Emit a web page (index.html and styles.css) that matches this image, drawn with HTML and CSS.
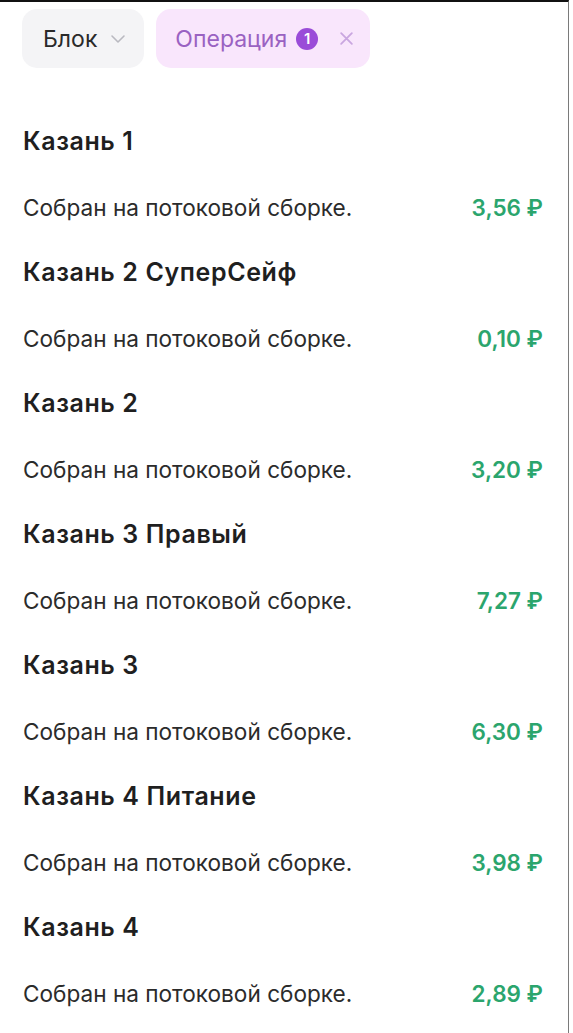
FILE: index.html
```html
<!DOCTYPE html>
<html lang="ru">
<head>
    <meta charset="UTF-8">
    <meta name="viewport" content="width=device-width, initial-scale=1.0">
    <title>Операции</title>
    <link rel="stylesheet" href="styles.css">
</head>
<body>

<div class="screen">
    <div class="filters">
        <div class="chip">
            <span>Блок</span>
            <svg class="chevron" width="16" height="10" viewBox="0 0 16 10"><path d="M2 2l6 6 6-6" fill="none" stroke="currentColor" stroke-width="1.6" stroke-linecap="round" stroke-linejoin="round"/></svg>
        </div>
        <div class="chip chip-active">
            <span>Операция</span>
            <span class="badge">1</span>
            <svg class="close" width="15" height="15" viewBox="0 0 14 14"><path d="M2 2l10 10M12 2L2 12" fill="none" stroke="currentColor" stroke-width="1.7" stroke-linecap="round"/></svg>
        </div>
    </div>

    <div class="list">
        <div class="group">
            <div class="title">Казань 1</div>
            <div class="row"><span>Собран на потоковой сборке.</span><span class="price">3,56 ₽</span></div>
        </div>
        <div class="group">
            <div class="title">Казань 2 СуперСейф</div>
            <div class="row"><span>Собран на потоковой сборке.</span><span class="price">0,10 ₽</span></div>
        </div>
        <div class="group">
            <div class="title">Казань 2</div>
            <div class="row"><span>Собран на потоковой сборке.</span><span class="price">3,20 ₽</span></div>
        </div>
        <div class="group">
            <div class="title">Казань 3 Правый</div>
            <div class="row"><span>Собран на потоковой сборке.</span><span class="price">7,27 ₽</span></div>
        </div>
        <div class="group">
            <div class="title">Казань 3</div>
            <div class="row"><span>Собран на потоковой сборке.</span><span class="price">6,30 ₽</span></div>
        </div>
        <div class="group">
            <div class="title">Казань 4 Питание</div>
            <div class="row"><span>Собран на потоковой сборке.</span><span class="price">3,98 ₽</span></div>
        </div>
        <div class="group">
            <div class="title">Казань 4</div>
            <div class="row"><span>Собран на потоковой сборке.</span><span class="price">2,89 ₽</span></div>
        </div>
    </div>
</div>

</body>
</html>
```

FILE: styles.css
```css
body {
    margin: 0;
    background: #fff;
    font-family: Inter, "Noto Sans", sans-serif;
    color: #232323;
}

.screen {
    width: 568px;
    height: 1031px;
    border-top: 2px solid #111;
    border-right: 1px solid #7a7a7a;
    overflow: hidden;
}

.filters {
    display: flex;
    gap: 12px;
    padding: 7px 0 0 22px;
}

.chip {
    display: flex;
    align-items: center;
    gap: 13px;
    height: 59px;
    padding: 0 18px 0 21px;
    border-radius: 15px;
    background: #f4f4f6;
    font-size: 23px;
    color: #2a2a2a;
}

.chevron {
    color: #b9b9c0;
}

.chip-active {
    background: #f9e6fc;
    color: #9a62c2;
    padding: 0 16px 0 19px;
    gap: 9px;
}

.badge {
    display: flex;
    align-items: center;
    justify-content: center;
    width: 22px;
    height: 22px;
    border-radius: 50%;
    background: #9a4cd8;
    color: #fff;
    font-size: 15px;
    font-weight: 600;
}

.close {
    color: #c9a6e0;
    margin-left: 12px;
}

.list {
    padding: 41px 25px 0 23px;
}

.title {
    height: 65px;
    line-height: 65px;
    font-size: 25px;
    font-weight: 600;
    letter-spacing: 0.6px;
    color: #1f1f1f;
}

.row {
    display: flex;
    justify-content: space-between;
    align-items: center;
    height: 66px;
    font-size: 22.6px;
    color: #2b2b2b;
}

.price {
    color: #2ba56d;
    font-weight: 600;
    font-size: 22.5px;
}
```
